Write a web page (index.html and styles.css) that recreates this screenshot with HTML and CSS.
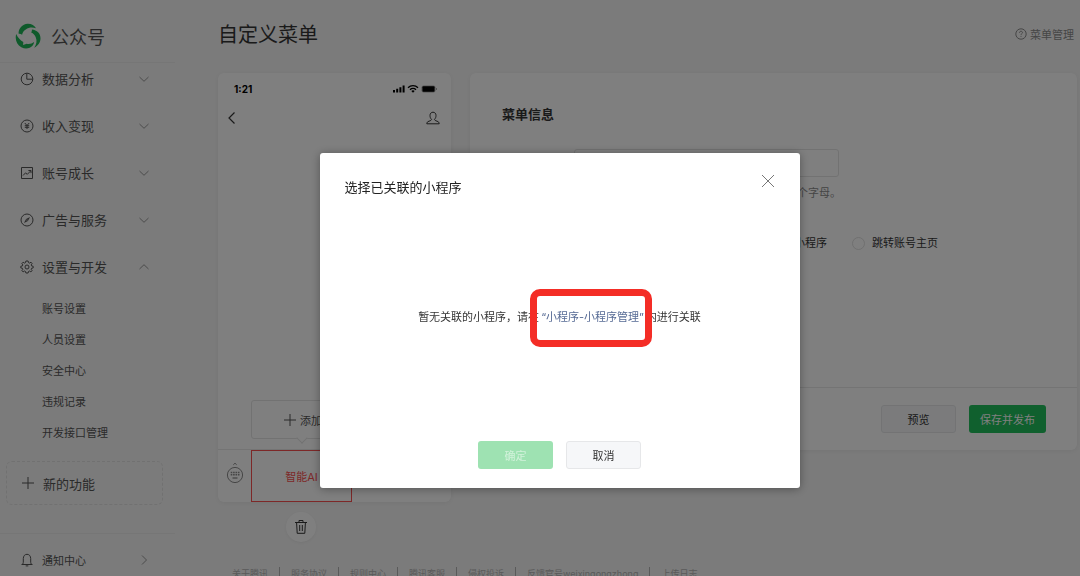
FILE: index.html
```html
<!DOCTYPE html>
<html lang="zh-CN">
<head>
    <meta charset="UTF-8">
    <meta name="viewport" content="width=device-width, initial-scale=1.0">
    <title>自定义菜单 - 公众号</title>
    <link rel="stylesheet" href="styles.css">
</head>
<body>

    <div class="app">
        <aside class="sidebar">
            <div class="brand">
                <svg class="brand-logo" viewBox="0 0 26 26" fill="#07c160">
                    <path d="M3.6 10.8C3.3 5.5 7.3.9 12.6.7c3.9-.1 7 1.700 8.400 4.600-3.600-1.200-7.200-.9-10.200 1.200-2.200 1.400-3.300 3-3.700 5.300-1.200-.9-2.400-1.300-3.500-1z"/>
                    <path d="M16.900 6.500c5 .4 8.800 4.100 8.600 9-.1 4-2.600 7.500-6.300 9.200 2.300-3.300 3-6.800 1.600-10.200-.9-2.400-2.400-4-4.600-5 .6-.9.9-1.900.7-3z"/>
                    <path d="M1.200 11c-1.500 5.600.6 10.800 5.100 13.200 4.200 2.200 8.800 1.300 11.400-1.700.9-1.100 1.300-2.300 1.400-3.500-2 1.700-4.600 2.300-7.400 1.800l-3.600 1.100.2-3C5 17.200 2.800 14.500 1.200 11z"/>
                </svg>
                <span>公众号</span>
            </div>

            <nav class="nav">
                <a class="nav-item" href="#">
                    <svg class="icon" viewBox="0 0 14 14"><path d="M6.800 1.200a5.800 5.800 0 1 0 6 6h-6z"/><path d="M6.800 1.200c3.300 0 6 2.700 6 6"/></svg>
                    <span>数据分析</span>
                    <svg class="chevron" viewBox="0 0 12 12"><path d="M1.500 4 6 8.300 10.500 4"/></svg>
                </a>
                <a class="nav-item" href="#">
                    <svg class="icon" viewBox="0 0 14 14"><circle cx="7" cy="7" r="6"/><path d="M4.800 4 7 6.500 9.200 4M7 6.500V10M4.800 6.700h4.400M4.800 8.300h4.400"/></svg>
                    <span>收入变现</span>
                    <svg class="chevron" viewBox="0 0 12 12"><path d="M1.500 4 6 8.300 10.500 4"/></svg>
                </a>
                <a class="nav-item" href="#">
                    <svg class="icon" viewBox="0 0 14 14"><path d="M1.500 1.500h11v11h-11z"/><path d="M3 9.500l2.500-2.600 1.800 1.400 3.500-3.500M8.400 4.500h2.600v2.600"/></svg>
                    <span>账号成长</span>
                    <svg class="chevron" viewBox="0 0 12 12"><path d="M1.500 4 6 8.300 10.500 4"/></svg>
                </a>
                <a class="nav-item" href="#">
                    <svg class="icon" viewBox="0 0 14 14"><circle cx="7" cy="7" r="6"/><path d="M10 4 7.900 7.900 4 10l2.100-3.900z" fill="currentColor" stroke="none"/><circle cx="7" cy="7" r=".6" fill="#fff" stroke="none"/></svg>
                    <span>广告与服务</span>
                    <svg class="chevron" viewBox="0 0 12 12"><path d="M1.500 4 6 8.300 10.500 4"/></svg>
                </a>
                <a class="nav-item" href="#">
                    <svg class="icon" viewBox="0 0 14 14"><path d="M5.900 1h2.200l.4 1.600 1.100.5L11 2.200 12.100 3.500l-.9 1.400.4 1 1.600.4v1.600l-1.600.4-.4 1 .9 1.400-1.200 1.200-1.400-.9-1 .5L8.100 13H5.900l-.4-1.500-1-.5-1.400.9-1.200-1.200.9-1.400-.4-1L.8 7.900V6.300l1.600-.4.4-1-.9-1.400L3.100 2.200l1.400.9 1-.5z"/><circle cx="7" cy="7" r="2"/></svg>
                    <span>设置与开发</span>
                    <svg class="chevron" viewBox="0 0 12 12"><path d="M1.500 8 6 3.700 10.500 8"/></svg>
                </a>
                <div class="subnav">
                    <a href="#">账号设置</a>
                    <a href="#">人员设置</a>
                    <a href="#">安全中心</a>
                    <a href="#">违规记录</a>
                    <a href="#">开发接口管理</a>
                </div>
            </nav>

            <button class="new-feature" type="button">
                <svg class="icon" viewBox="0 0 14 14"><path d="M7 1v12M1 7h12"/></svg>
                <span>新的功能</span>
            </button>

            <a class="notice" href="#">
                <svg class="icon" viewBox="0 0 14 14"><path d="M1.500 11.500h11M2.700 11.500l.6-2.200V5.600C3.300 3 4.800 1.300 7 1.300s3.700 1.700 3.700 4.300v3.700l.6 2.200M5.700 12.900h2.600"/></svg>
                <span>通知中心</span>
                <svg class="chevron" viewBox="0 0 12 12"><path d="M4 1.500 8.500 6 4 10.500"/></svg>
            </a>
        </aside>

        <main class="main">
            <header class="page-header">
                <h1>自定义菜单</h1>
                <a class="help" href="#">
                    <svg viewBox="0 0 12 12"><circle cx="6" cy="6" r="5.200"/><path d="M4.500 4.800C4.500 3.800 5.100 3.300 6 3.300s1.500.5 1.500 1.300c0 1-1.500 1.200-1.500 2.200M6 7.900v.9"/></svg>
                    <span>菜单管理</span>
                </a>
            </header>

            <div class="content">
                <div class="preview">
                    <section class="phone">
                        <div class="phone-status">
                            <span>1:21</span>
                            <svg viewBox="0 0 44 10">
                                <path d="M0 6h2v2.500H0zM3.200 4.700h2v3.800h-2zM6.400 3.200h2v5.300h-2zM9.600 1.500h2v7h-2z"/>
                                <path d="M15 3.700a7 7 0 0 1 10 0M17 5.700a4.300 4.300 0 0 1 6 0" fill="none" stroke="#000" stroke-width="1.300"/>
                                <path d="M18.300 7a2.500 2.500 0 0 1 3.400 0L20 8.800z"/>
                                <rect x="28.500" y="1.500" width="14" height="7" rx="2" fill="#aaa"/>
                                <rect x="29.500" y="2.300" width="12" height="5.400" rx="1"/>
                                <path d="M43 4h1v2h-1z" fill="#aaa"/>
                            </svg>
                        </div>
                        <div class="phone-nav">
                            <svg viewBox="0 0 14 14"><path d="M9.500 1.500 4 7l5.500 5.500" stroke-width="1.200"/></svg>
                            <svg viewBox="0 0 14 14"><path d="M5.500 8.300C4.400 7.300 4 6 4 4.600 4 2.600 5.100 1.200 7 1.200s3 1.400 3 3.400c0 1.400-.4 2.700-1.500 3.700.1 1 .8 1.300 2.500 1.900 1.500.5 2.200 1.200 2.200 2.600H.8c0-1.400.7-2.100 2.200-2.600 1.700-.6 2.400-.9 2.500-1.900z"/></svg>
                        </div>
                        <div class="phone-body">
                            <button class="add-submenu" type="button">
                                <svg viewBox="0 0 12 12"><path d="M6 0v12M0 6h12"/></svg>
                                <span>添加</span>
                            </button>
                        </div>
                        <div class="phone-menu">
                            <div class="keyboard">
                                <svg viewBox="0 0 18 22">
                                    <path d="M7.300 2.800 9 1.200l1.700 1.600"/>
                                    <circle cx="9" cy="13" r="7.600"/>
                                    <path d="M4.700 10.500h8.800M4.700 12.700h8.800" stroke-width="1.500" stroke-dasharray="1.600 .8"/>
                                    <path d="M6.500 16h5" stroke-width="1.300"/>
                                </svg>
                            </div>
                            <button class="menu-cell active" type="button">智能AI</button>
                            <div class="menu-cell"></div>
                        </div>
                    </section>
                    <button class="delete" type="button" aria-label="删除">
                        <svg viewBox="0 0 14 16"><path d="M1 3.500h12M5 3.300V1.500h4v1.800M2.600 3.700l.6 10.600h7.600l.6-10.600M5.700 6v6M8.300 6v6"/></svg>
                    </button>
                </div>

                <section class="panel">
                    <div class="panel-body">
                        <h2>菜单信息</h2>
                        <div class="field">
                            <label for="name">名称</label>
                            <div class="field-main">
                                <input class="text-input" type="text" id="name">
                                <p class="hint">仅支持中英文和数字，字数不超过4个汉字或8个字母。</p>
                            </div>
                        </div>
                        <div class="field">
                            <span>消息类型</span>
                            <div class="radios">
                                <label><input type="radio" name="type">发送消息</label>
                                <label><input type="radio" name="type">跳转网页</label>
                                <label><input type="radio" name="type">跳转小程序</label>
                                <label><input type="radio" name="type">跳转账号主页</label>
                            </div>
                        </div>
                    </div>
                    <div class="panel-footer">
                        <button class="btn" type="button">预览</button>
                        <button class="btn btn-primary" type="button">保存并发布</button>
                    </div>
                </section>
            </div>

            <footer class="footer">
                <a href="#">关于腾讯</a>
                <a href="#">服务协议</a>
                <a href="#">规则中心</a>
                <a href="#">腾讯客服</a>
                <a href="#">侵权投诉</a>
                <a href="#">反馈官号weixingongzhong</a>
                <a href="#">上传日志</a>
            </footer>
        </main>
    </div>

    <div class="mask">
        <div class="dialog" role="dialog" aria-labelledby="dialog-title">
            <div class="dialog-header">
                <h3 id="dialog-title">选择已关联的小程序</h3>
                <button class="close" type="button" aria-label="关闭">
                    <svg viewBox="0 0 14 14"><path d="M1 1l12 12M13 1 1 13"/></svg>
                </button>
            </div>
            <div class="dialog-body">
                <p>暂无关联的小程序，请在<a class="marked" href="#">“小程序-小程序管理”</a>内进行关联</p>
            </div>
            <div class="dialog-footer">
                <button class="btn btn-primary" type="button" disabled>确定</button>
                <button class="btn" type="button">取消</button>
            </div>
        </div>
    </div>

</body>
</html>
```

FILE: styles.css
```css
* {
    box-sizing: border-box;
}
body {
    margin: 0;
    background-color: #f6f6f6;
    color: #353535;
    font-family: Inter, "Noto Sans CJK SC", sans-serif;
    font-size: 11px;
    overflow: hidden;
}
h1, h2, h3, p {
    margin: 0;
    font-weight: normal;
}
a {
    color: inherit;
    text-decoration: none;
}
button, input {
    font: inherit;
    color: inherit;
}
button {
    padding: 0;
    border: none;
    background: none;
    cursor: pointer;
}
svg {
    flex: none;
    fill: none;
    stroke: currentColor;
    stroke-width: 1;
}
.app {
    display: flex;
    height: 100vh;
    overflow: hidden;
}

/* sidebar */
.sidebar {
    flex: none;
    width: 175px;
    font-size: 13px;
    color: #555;
}
.brand {
    display: flex;
    align-items: center;
    gap: 10px;
    height: 63px;
    padding: 9px 15px 0;
    border-bottom: 1px solid #ececec;
    font-size: 18px;
}
.brand-logo {
    width: 26px;
    height: 26px;
    fill: #1fb457;
    stroke: none;
}
.nav {
    display: flex;
    flex-direction: column;
    gap: 16px;
}
.nav-item {
    display: flex;
    align-items: center;
    gap: 8px;
    height: 31px;
    padding: 0 25px 0 20px;
}
.icon {
    width: 14px;
    height: 14px;
}
.chevron {
    width: 12px;
    height: 12px;
    margin-left: auto;
    color: #999;
}
.subnav {
    display: flex;
    flex-direction: column;
    margin-top: -4px;
    padding-left: 42px;
    font-size: 11px;
    line-height: 31px;
}
.new-feature {
    display: flex;
    align-items: center;
    gap: 8px;
    width: 157px;
    height: 44px;
    margin: 12px 6px 28px;
    padding-left: 14px;
    border: 1px dashed #e2e2e2;
    border-radius: 6px;
}
.notice {
    display: flex;
    align-items: center;
    gap: 8px;
    height: 52px;
    padding: 0 25px 0 20px;
    border-top: 1px solid #ececec;
    font-size: 11px;
}

/* main column */
.main {
    flex: 1;
    min-width: 0;
    padding: 0 3px 0 43px;
}
.page-header {
    display: flex;
    align-items: center;
    justify-content: space-between;
    height: 73px;
    padding: 0 3px 6px 0;
}
.page-header h1 {
    font-size: 20px;
}
.help {
    display: flex;
    align-items: center;
    gap: 3px;
    color: #8c8c8c;
}
.help svg {
    width: 12px;
    height: 12px;
}
.content {
    display: flex;
    align-items: flex-start;
    gap: 19px;
}
.preview {
    flex: none;
    display: flex;
    flex-direction: column;
    align-items: flex-start;
    width: 233px;
}
.phone {
    display: flex;
    flex-direction: column;
    width: 100%;
    min-height: 429px;
    background-color: #fff;
    border-radius: 6px;
    box-shadow: 0 1px 4px rgba(0, 0, 0, 0.05);
}
.phone-status {
    display: flex;
    align-items: center;
    justify-content: space-between;
    height: 32px;
    padding: 0 14px 0 16px;
    color: #000;
    font-size: 10px;
    font-weight: bold;
}
.phone-status svg {
    width: 44px;
    height: 10px;
    fill: #000;
    stroke: none;
}
.phone-nav {
    display: flex;
    align-items: center;
    justify-content: space-between;
    height: 26px;
    padding: 0 11px 0 7px;
}
.phone-nav svg {
    width: 14px;
    height: 14px;
}
.phone-body {
    flex: 1;
    display: flex;
    align-items: flex-end;
    padding: 0 0 10px 33px;
}
.add-submenu {
    position: relative;
    display: flex;
    align-items: center;
    justify-content: center;
    gap: 4px;
    width: 100px;
    height: 39px;
    padding-left: 4px;
    border: 1px solid #e4e4e4;
    border-radius: 3px;
    color: #555;
}
.add-submenu svg {
    width: 12px;
    height: 12px;
}
.add-submenu::after {
    content: "";
    position: absolute;
    bottom: -4px;
    left: 46px;
    width: 7px;
    height: 7px;
    background-color: #fff;
    border: solid #e4e4e4;
    border-width: 0 1px 1px 0;
    transform: rotate(45deg);
}
.phone-menu {
    display: flex;
    height: 53px;
    border-top: 1px solid #e8e8e8;
}
.keyboard {
    display: flex;
    align-items: center;
    justify-content: center;
    width: 33px;
    padding-bottom: 6px;
    color: #8c8c8c;
}
.keyboard svg {
    width: 18px;
    height: 22px;
}
.menu-cell {
    flex: 1;
}
.menu-cell.active {
    border: 1px solid #fa5151;
    color: #fa5151;
}
.delete {
    display: flex;
    align-items: center;
    justify-content: center;
    width: 30px;
    height: 30px;
    margin: 10px 0 0 68px;
    background-color: #fff;
    border-radius: 50%;
    box-shadow: 0 1px 3px rgba(0, 0, 0, 0.05);
}
.delete svg {
    width: 14px;
    height: 16px;
}

/* menu form */
.panel {
    flex: 1;
    display: flex;
    flex-direction: column;
    min-height: 377px;
    background-color: #fff;
    border-radius: 6px;
    box-shadow: 0 1px 4px rgba(0, 0, 0, 0.05);
}
.panel-body {
    flex: 1;
    padding: 32px;
}
.panel h2 {
    margin-bottom: 26px;
    font-size: 13px;
    font-weight: bold;
    line-height: 18px;
}
.field {
    display: flex;
    margin-bottom: 28px;
    line-height: 28px;
}
.field > :first-child {
    width: 72px;
}
.field-main {
    width: 265px;
}
.text-input {
    display: block;
    width: 100%;
    height: 28px;
    padding: 0 8px;
    border: 1px solid #e4e4e4;
    border-radius: 3px;
    background-color: #fff;
}
.hint {
    margin-top: 9px;
    color: #8c8c8c;
    line-height: 15px;
    white-space: nowrap;
}
.radios {
    display: flex;
    gap: 25px;
}
.radios label {
    display: flex;
    align-items: center;
    gap: 7px;
    white-space: nowrap;
}
.radios input {
    appearance: none;
    width: 13px;
    height: 13px;
    margin: 0;
    border: 1px solid #e0e0e0;
    border-radius: 50%;
}
.panel-footer {
    display: flex;
    justify-content: flex-end;
    gap: 13px;
    padding: 17px 31px;
    border-top: 1px solid #e8e8e8;
}
.btn {
    min-width: 75px;
    height: 28px;
    padding: 0 11px;
    border: 1px solid #e6e7e9;
    border-radius: 3px;
    background-color: #f6f7f9;
}
.btn-primary {
    border: none;
    background-color: #20c05c;
    color: #fff;
}
.btn-primary:disabled {
    background-color: #9ee2b2;
    color: #d2f2db;
    cursor: default;
}

/* footer links */
.footer {
    display: flex;
    margin-top: 25px;
    padding-left: 3px;
    color: #b4b4b4;
    font-size: 9px;
    line-height: 14px;
}
.footer a {
    padding: 0 11px;
    border-left: 1px solid #b4b4b4;
}
.footer a:first-child {
    border-left: none;
}

/* dialog */
.mask {
    position: fixed;
    inset: 0;
    display: flex;
    align-items: center;
    justify-content: center;
    padding: 64px 0 0 39px;
    background-color: rgba(0, 0, 0, 0.5);
}
.dialog {
    width: 480px;
    background-color: #fff;
    border-radius: 3px;
    box-shadow: 0 1px 10px rgba(0, 0, 0, 0.35);
}
.dialog-header {
    display: flex;
    align-items: flex-start;
    justify-content: space-between;
    height: 68px;
    padding: 21px 25px 0;
}
.dialog-header h3 {
    color: #222;
    font-size: 13px;
    line-height: 26px;
}
.close {
    display: flex;
    color: #777;
}
.close svg {
    width: 14px;
    height: 14px;
}
.dialog-body {
    display: flex;
    align-items: center;
    justify-content: center;
    min-height: 190px;
}
/* highlight frame drawn around the link */
.marked {
    position: relative;
    margin: 0 2px;
    color: #576b95;
}
.marked::after {
    content: "";
    position: absolute;
    inset: -21px -8px -23px -11px;
    border: 7px solid #f42d26;
    border-radius: 10px;
}
.dialog-footer {
    display: flex;
    justify-content: center;
    gap: 13px;
    padding: 30px 0 19px;
}
```
